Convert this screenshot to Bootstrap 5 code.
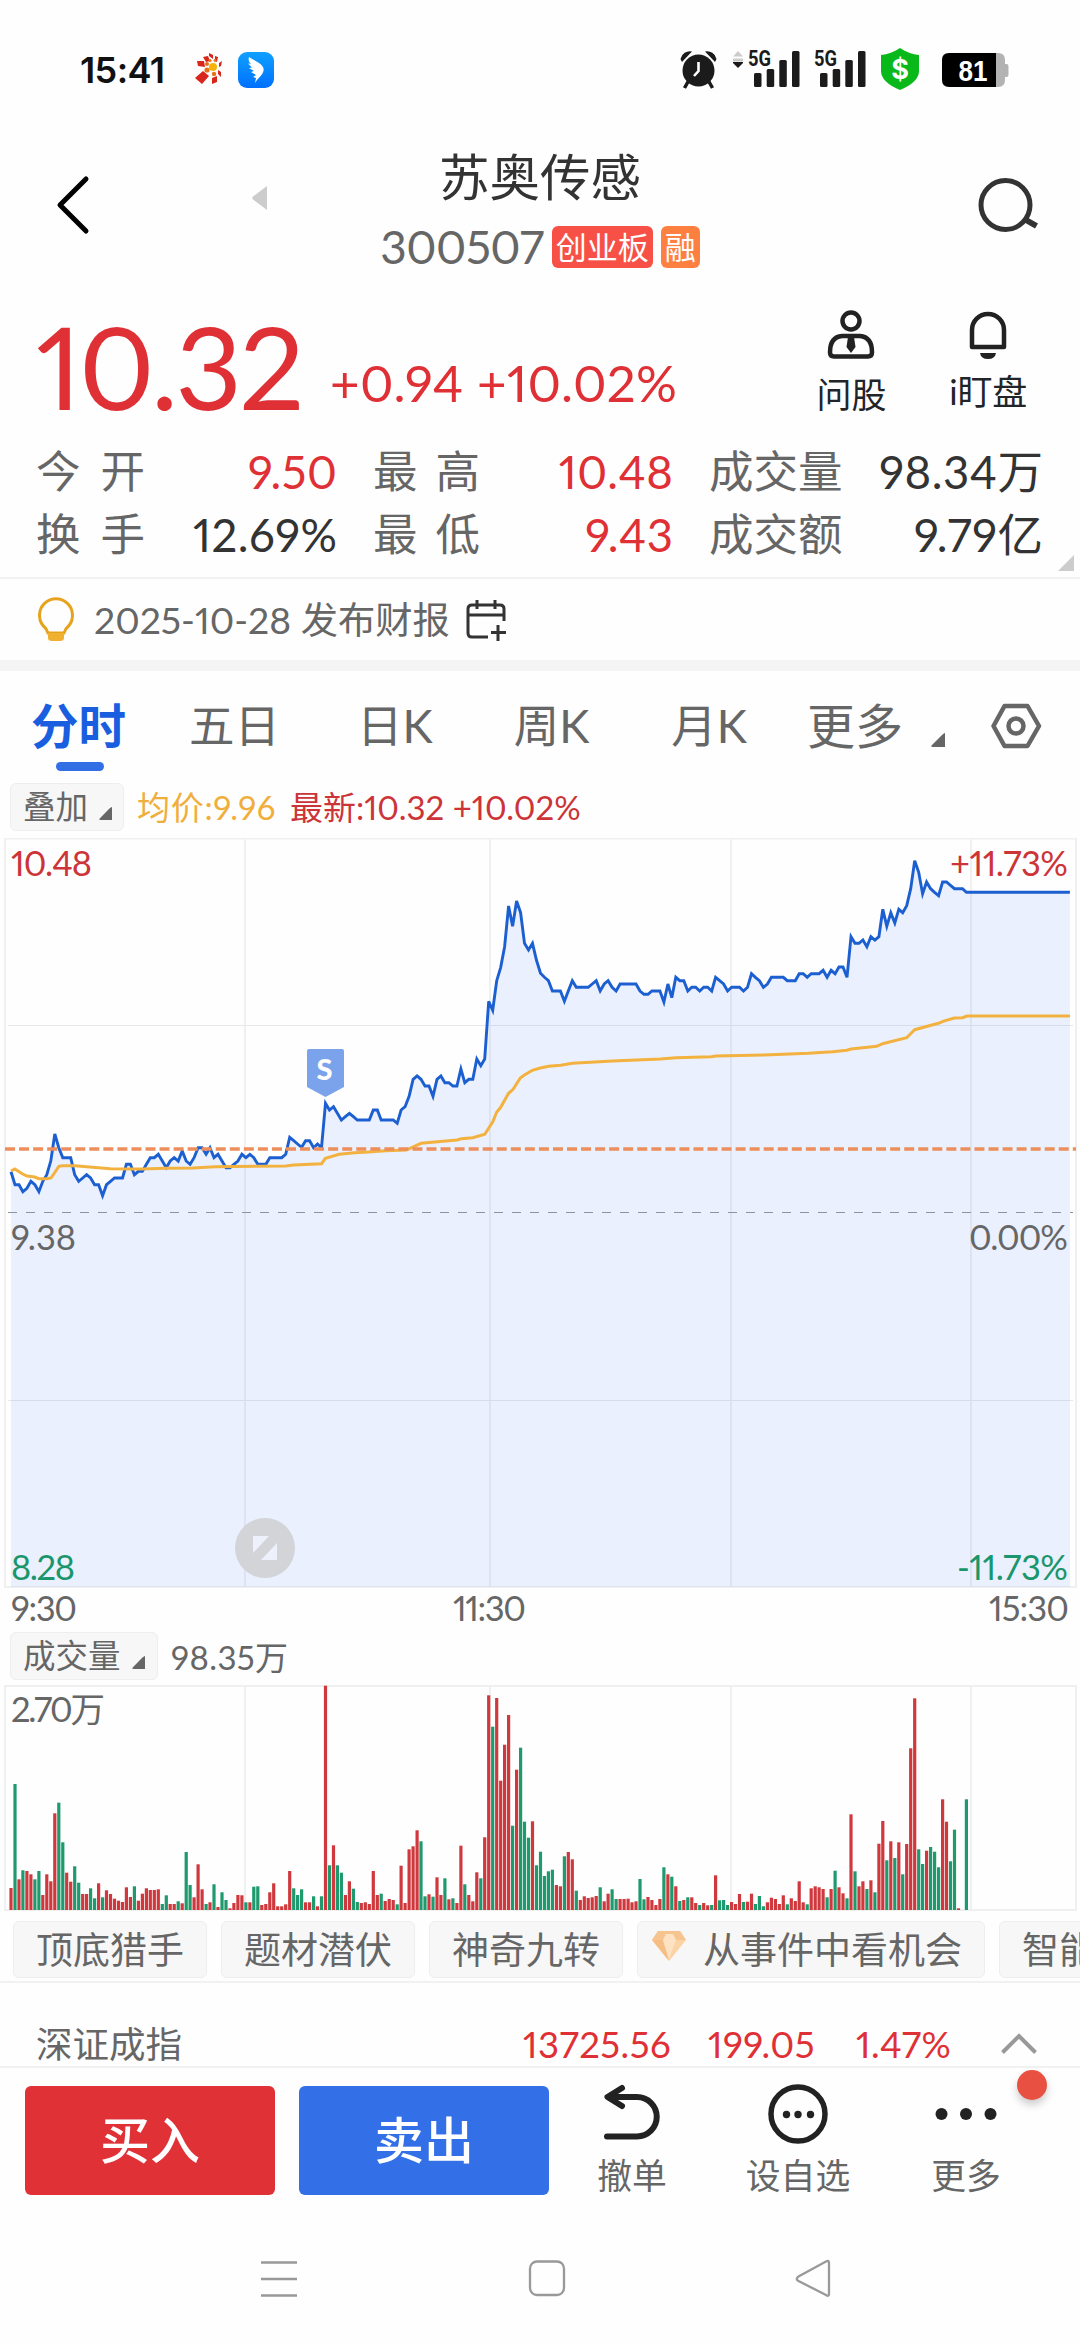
<!DOCTYPE html>
<html lang="zh-CN">
<head>
<meta charset="utf-8">
<meta name="viewport" content="width=device-width, initial-scale=1">
<title>苏奥传感 300507</title>
<link href="https://cdn.jsdelivr.net/npm/bootstrap@5.3.0/dist/css/bootstrap.min.css" rel="stylesheet">
<style>
:root{--up:#df3036;--txt:#333;--mut:#666}
html,body{background:#fefefe}
body{width:1080px;margin:0 auto;overflow-x:hidden;font-family:Lato,"Noto Sans CJK SC",sans-serif;color:var(--txt);line-height:1;font-variant-numeric:proportional-nums}
svg{display:block;flex:none}
.up{color:var(--up)}.mut{color:var(--mut)}
.status{height:140px;padding:0 70px 0 80px}
.clock{font:600 36px Inter,sans-serif;color:#111;width:90px;letter-spacing:-.6px}
.head{height:150px;display:grid;grid-template-columns:1fr auto 1fr;align-items:start}
.head .back{margin:35px 0 0 55px}
.head .prev{margin:46px 0 0 161px}
.head .find{margin:35px 41px 0 auto}
.title{font-size:50.5px;height:74px}
.code{font-size:46px;color:var(--mut);height:66px;letter-spacing:-.5px}
.tagx{color:#fff;font-size:31px;height:42px;border-radius:6px;letter-spacing:0}
.tag-board{background:#f75147}.tag-margin{background:#fe8041}
.quote{height:150px;padding-left:36px}
.last{font-size:115px;letter-spacing:-2.600px;line-height:150px;width:294px}
.chg{font-size:51px;line-height:186px;letter-spacing:.35px;white-space:nowrap}
.tool{font-size:35px;padding:18px 53px 0 0;letter-spacing:-.2px}
.tl{margin-right:63px}
.tlab{height:36px;line-height:36px}
.tl .tlab{margin-top:14px}.tl2 .tlab{margin-top:11px}
.stats{display:grid;grid-template-columns:109px 192px 143px 193px 170px 200px;padding-left:36px;grid-auto-rows:63px;align-items:center;font-size:45.5px;letter-spacing:.5px;height:137px}
.stats .k{color:var(--mut);font-size:44.5px;display:flex;justify-content:space-between;letter-spacing:0}
.stats .v{text-align:right;margin-right:-.5px}
.stats .c2,.stats .c3{padding-left:36px}
#corner{left:1058px;top:115px}
.news{height:83px;border-top:2px solid #f1f1f1;padding-left:36px;font-size:37.3px}
.newst{margin-left:18px}.cal{margin:-2px 0 0 14px}
.band{height:11px;background:#f4f4f4}
.tabs{height:112px;font-size:45.5px;color:var(--mut);padding-bottom:2px}
.tab-it{height:112px}
.tab-on{color:#1a5ee0;font-weight:700;font-size:47.5px}
.tab-on i{width:48px;height:9px;border-radius:5px;background:#326fe5;left:25px;top:92px}
#t0{margin-left:31px}#t1{margin-left:63px}#t2{margin-left:77px}#t3{margin-left:81px}#t4{margin-left:82px}#t5{margin-left:60px;font-size:48px}#t6{margin:27px 0 0 28px}#t7{margin:-1px 0 0 45px}
.chipx{background:#f7f7f7;border:1px solid #eee;border-radius:6px;color:var(--mut)}
.mini{height:48px;font-size:32.5px;padding-left:12px}
#ov{width:114px}#vo{width:148px}.mini svg{margin:12px 0 0 11px}
.legend{height:55px;padding-left:10px;font-size:33px}
.legend>span,.volrow>span{height:48px;display:inline-flex;align-items:center;white-space:nowrap}
.lg1{margin-left:13px}.lg2{margin-left:13px;color:#cc3438}
.avg{color:#f0ae3c;width:140px;letter-spacing:.7px}
.volrow{height:50px;padding-left:10px;font-size:33px}
.vtx{letter-spacing:.4px;padding-top:2px}
.strats{height:71px;padding:9px 0 0 13px;gap:14px;font-size:37px;border-bottom:2px solid #f1f1f1}
.strats .chipx{height:57px;padding:0 22px;flex:none;white-space:nowrap}
#gem{padding-left:14px}#gem svg{margin:-7px 17px 0 0}
.index{height:85px;padding:39px 0 0 36px;font-size:36.5px;border-bottom:2px solid #f1f1f1;letter-spacing:.45px}
.idxn{font-size:36.5px;width:487px;letter-spacing:0}.ix1{width:185px}.ix2{width:148px}.ix3{width:144px}
.trade{height:137px;padding:18px 0 0 25px}
.bigbtn{width:250px;height:109px;border-radius:6px;border:0;font-size:50px;font-weight:500;color:#fff!important;padding:0}
.buy{background:#e03137!important}.sell{background:#336fe6!important}
.act{font-size:34.8px;color:var(--mut);margin-top:-3px}
.act div{margin-top:13px;height:36px;line-height:36px;white-space:nowrap}
.a1{margin-left:47px;width:72px}.a1 div{margin-top:17px}.a2{margin-left:77px;width:106px}.a3{margin-left:79px;width:72px}
.reddot{width:30px;height:30px;border-radius:50%;background:#e85042;box-shadow:0 5px 8px rgba(0,0,0,.2);left:1017px;top:2px}
.sysnav{height:139px;padding-top:54px}
#n1{margin-left:260px}#n2{margin-left:230px}#n3{margin-left:229px}
text{font-family:Lato,"Noto Sans CJK SC",sans-serif}
.cell5g{font-family:Roboto,sans-serif}.cash{font-family:Inter,sans-serif}.batt{font-family:"Liberation Sans",sans-serif}
</style>
</head>
<body>
<header>
  <div class="status d-flex align-items-center">
    <span class="clock">15:41</span>
    <svg class="ms-4" width="36" height="36" viewBox="194 52 36 36">
      <g fill="#d8261c"><path d="M197 61l7 0 1 6-7-1zM195 78l8-7 6 5-7 8zM203 57l5-1 2 5-4 1zM212 78l5-2 0 6-5 2zM209 53l4 2 0 4-4-3zM215 56l3 1-1 5-2-1zM219 63l3-2-1 5-2 1zM218 70l3 2 0 5-3-3z"/></g>
      <circle cx="213" cy="67" r="4" fill="#f6b40a"/><g fill="#e8701a"><circle cx="207" cy="64" r="2"/><circle cx="210" cy="60.500" r="1.600"/><circle cx="207" cy="70" r="2.600"/><circle cx="214" cy="74" r="2.200"/><circle cx="215" cy="60.500" r="1.400"/></g>
    </svg>
    <svg class="ms-2" width="36" height="36" viewBox="0 0 36 36"><defs><linearGradient id="dg" x2="0" y2="1"><stop stop-color="#10a0ff"/><stop offset="1" stop-color="#0070ff"/></linearGradient></defs><rect width="36" height="36" rx="9" fill="url(#dg)"/><path d="M11 5C15 8 22 10 25 15C27 19 24 23 19 28L17 31L18 26L15 25L18 23L13 20L16 19L11 16L14 15.500L10 11.500L13 12C11 10 10 8 11 5Z" fill="#fff"/></svg>
    <svg class="ms-auto" width="330" height="44" viewBox="680 48 330 44">
      <g fill="#1b1b1b"><circle cx="698.500" cy="70.500" r="16"/><path d="M680.500 59A9.500 9.500 0 0 1 692 51.500L682 62ZM716.500 59A9.500 9.500 0 0 0 705 51.500L715 62Z"/><path d="M689 80l-4.500 8M708 80l4.500 8" stroke="#1b1b1b" stroke-width="3.500"/></g>
      <path d="M698.500 62v9l-4.500 5" fill="none" stroke="#fff" stroke-width="2.600"/>
      <path d="M733 56.500L738 51L743 56.500Z" fill="#ccc"/><path d="M733 58.500h10v3h-10Z" fill="#ccc"/><path d="M733 62h10v1l-5 5L733 63Z" fill="#1b1b1b"/>
      <g id="sg" fill="#1b1b1b"><text class="cell5g" x="748" y="66" font-size="22" font-weight="700" textLength="23" lengthAdjust="spacingAndGlyphs">5G</text><rect x="754" y="73" width="7.500" height="14" rx="1.500"/><rect x="766.700" y="69" width="7.500" height="18" rx="1.500"/><rect x="779.300" y="60" width="7.500" height="27" rx="1.500"/><rect x="792" y="51" width="7.500" height="36" rx="1.500"/></g>
      <use href="#sg" x="66"/>
      <path d="M900 48Q909 54 919 55V71Q919 82 900 90Q881 82 881 71V55Q891 54 900 48Z" fill="#09b919"/>
      <text class="cash" x="900" y="79" font-size="27" font-weight="700" fill="#fff" text-anchor="middle">$</text>
      <path d="M990 53h8q7 0 7 7v4h1.500q2 0 2 3v7q0 3-2 3H1005v3q0 7-7 7h-8Z" fill="#b3b3b3"/><path d="M996 53H949q-7 0-7 7v20q0 7 7 7h47Z" fill="#000"/>
      <text class="batt" x="958.500" y="81" font-size="29" font-weight="700" fill="#fff" textLength="29" lengthAdjust="spacingAndGlyphs">81</text>
    </svg>
  </div>
  <div class="head">
    <div class="d-flex align-items-start">
      <svg class="back" width="36" height="60" viewBox="0 0 36 60"><path d="M31 4L5 30L31 56" fill="none" stroke="#000" stroke-width="5" stroke-linecap="round" stroke-linejoin="round"/></svg>
      <svg class="prev" width="16" height="24" viewBox="0 0 16 24"><path d="M15 0V24L1 13.500Q-.5 12 1 10.500Z" fill="#ccc"/></svg>
    </div>
    <div class="text-center">
      <div class="title d-flex align-items-center justify-content-center">苏奥传感</div>
      <div class="code d-flex align-items-center justify-content-center">300507<span class="tagx tag-board d-inline-flex align-items-center ms-2 px-1">创业板</span><span class="tagx tag-margin d-inline-flex align-items-center px-1 ms-2">融</span></div>
    </div>
    <svg class="find" width="64" height="62" viewBox="974 174 64 62"><circle cx="1004.500" cy="204" r="24.500" fill="none" stroke="#333" stroke-width="5"/><path d="M1025 219l10.500 6" stroke="#333" stroke-width="6"/></svg>
  </div>
</header>
<main>
  <section class="quote d-flex up align-items-start">
    <span class="last">10.32</span><span class="chg">+0.94 +10.02%</span>
    <div class="d-flex ms-auto text-dark tool">
      <div class="text-center tl"><svg class="mx-auto" width="50" height="54" viewBox="826 308 50 54"><g fill="none" stroke="#222" stroke-width="4.500"><circle cx="851" cy="321" r="8.500"/><path d="M830 352.500Q830 337 842 336H860Q872 337 872 352.500Q872 356.500 868 356.500H834Q830 356.500 830 352.500Z"/></g><path d="M848 337h6l1.500 10-4.500 6-4.500-6Z" fill="#222"/></svg><div class="tlab">问股</div></div>
      <div class="text-center tl2"><svg class="mx-auto" width="50" height="54" viewBox="963 308 50 54"><path d="M972 347V330A16 16 0 0 1 1004 330V347Z" fill="none" stroke="#222" stroke-width="4.500" stroke-linejoin="round"/><path d="M980 353h16q-1 6-8 6t-8-6Z" fill="#222"/></svg><div class="tlab">i盯盘</div></div>
    </div>
  </section>
  <section class="stats position-relative">
    <span class="k"><b class="fw-normal">今</b><b class="fw-normal">开</b></span><span class="v up">9.50</span>
    <span class="k c2"><b class="fw-normal">最</b><b class="fw-normal">高</b></span><span class="v up">10.48</span>
    <span class="k c3">成交量</span><span class="v">98.34万</span>
    <span class="k"><b class="fw-normal">换</b><b class="fw-normal">手</b></span><span class="v">12.69%</span>
    <span class="k c2"><b class="fw-normal">最</b><b class="fw-normal">低</b></span><span class="v up">9.43</span>
    <span class="k c3">成交额</span><span class="v">9.79亿</span>
    <svg class="position-absolute" width="16" height="16" viewBox="0 0 16 16" id="corner"><path d="M16 0V16H0Z" fill="#ccc"/></svg>
  </section>
  <section class="news d-flex align-items-center mut">
    <svg width="40" height="46" viewBox="36 596 40 46"><path d="M48 632Q47 628 43 624.500A16.500 16.500 0 1 1 69 624.500Q65 628 64 632Z" fill="none" stroke="#e6a41e" stroke-width="3"/><path d="M48 632h16v5q0 3-4 3h-8q-4 0-4-3Z" fill="#f0b030"/></svg>
    <span class="newst">2025-10-28 发布财报</span>
    <svg class="cal" width="44" height="44" viewBox="460 596 44 44"><path d="M484 636H468q-4 0-4-4V608q0-4 4-4H496q4 0 4 4V620M464 614H500M473 599V608M491 599V608M494 624V640M487 631.500H502" fill="none" stroke="#333" stroke-width="3"/></svg>
  </section>
  <div class="band"></div>
  <nav class="tabs d-flex align-items-center">
    <span class="tab-on position-relative d-flex align-items-center tab-it" id="t0">分时<i class="position-absolute"></i></span>
    <span id="t1">五日</span><span id="t2">日K</span><span id="t3">周K</span><span id="t4">月K</span><span id="t5">更多</span>
    <svg id="t6" width="14" height="14" viewBox="0 0 14 14"><path d="M14 0V14H2Q-1 14 1 12L11 2Q13 0 14 0Z" fill="#666"/></svg>
    <svg id="t7" width="52" height="48" viewBox="990 701 52 48"><path d="M1004.500 705H1027.500L1039 725L1027.500 745H1004.500L993.500 725Z" fill="none" stroke="#666" stroke-width="4.500" stroke-linejoin="round"/><circle cx="1016" cy="725" r="7.500" fill="none" stroke="#666" stroke-width="4.500"/></svg>
  </nav>
  <div class="legend d-flex align-items-start">
    <span class="chipx mini" id="ov">叠加<svg width="13" height="13" viewBox="0 0 14 14"><path d="M14 0V14H2Q-1 14 1 12L11 2Q13 0 14 0Z" fill="#666"/></svg></span>
    <span class="avg lg1">均价:9.96</span><span class="lg2">最新:10.32 +10.02%</span>
  </div>
  <svg id="price" width="1080" height="794" viewBox="0 838 1080 794"></svg>
  <div class="volrow d-flex align-items-start mut">
    <span class="chipx mini" id="vo">成交量<svg width="13" height="13" viewBox="0 0 14 14"><path d="M14 0V14H2Q-1 14 1 12L11 2Q13 0 14 0Z" fill="#666"/></svg></span>
    <span class="lg1 vtx">98.35万</span>
  </div>
  <svg id="volume" width="1080" height="230" viewBox="0 1682 1080 230"></svg>
  <div class="strats d-flex overflow-hidden">
    <span class="chipx d-inline-flex align-items-center">顶底猎手</span>
    <span class="chipx d-inline-flex align-items-center">题材潜伏</span>
    <span class="chipx d-inline-flex align-items-center">神奇九转</span>
    <span class="chipx d-inline-flex align-items-center" id="gem"><svg width="34" height="30" viewBox="0 0 34 30"><path d="M6 0H28L34 9L17 30L0 9Z" fill="#fbd3a4"/><path d="M6 0H28L34 9H0Z" fill="#f6c48f"/><path d="M0 9H11L17 30Z" fill="#f6be85"/><path d="M11 9L14 3H21L24 9L17 28Z" fill="#fde3c3"/></svg>从事件中看机会</span>
    <span class="chipx d-inline-flex align-items-center">智能</span>
  </div>
  <section class="index d-flex align-items-center">
    <span class="mut idxn">深证成指</span><span class="up ix1">13725.56</span><span class="up ix2">199.05</span><span class="up ix3">1.47%</span>
    <svg class="ixc" width="38" height="22" viewBox="0 0 38 22"><path d="M2.500 19.500L19 3L35.500 19.500" fill="none" stroke="#999" stroke-width="4"/></svg>
  </section>
</main>
<footer>
  <div class="trade d-flex align-items-start position-relative">
    <button class="btn bigbtn buy">买入</button><button class="btn bigbtn sell ms-4">卖出</button>
    <div class="act text-center a1"><svg class="mx-auto" width="62" height="58" viewBox="602 2084 62 58"><path d="M608 2137.500H638A19.750 19.750 0 0 0 638 2098H610M623 2089L608.500 2098L623 2107" fill="none" stroke="#222" stroke-width="6" stroke-linecap="round" stroke-linejoin="round"/></svg><div>撤单</div></div>
    <div class="act text-center a2"><svg class="mx-auto" width="62" height="62" viewBox="767 2082 62 62"><circle cx="798" cy="2113" r="27" fill="none" stroke="#222" stroke-width="5.500"/><g fill="#222"><circle cx="786.500" cy="2113.500" r="3.700"/><circle cx="798" cy="2113.500" r="3.700"/><circle cx="810.500" cy="2113.500" r="3.700"/></g></svg><div>设自选</div></div>
    <div class="act text-center a3"><svg class="mx-auto" width="62" height="62" viewBox="935 2082 62 62"><g fill="#222"><circle cx="941.500" cy="2113" r="6"/><circle cx="966" cy="2113" r="6"/><circle cx="990.500" cy="2113" r="6"/></g></svg><div>更多</div></div>
    <span class="reddot position-absolute"></span>
  </div>
  <div class="sysnav d-flex">
    <svg id="n1" width="38" height="38" viewBox="0 0 38 38"><path d="M1 3.500H37M1 20H37M1 36.500H37" stroke="#999" stroke-width="2.500"/></svg>
    <svg id="n2" width="38" height="38" viewBox="0 0 38 38"><rect x="2" y="2.500" width="34" height="33.500" rx="7" fill="none" stroke="#999" stroke-width="2.300"/></svg>
    <svg id="n3" width="36" height="38" viewBox="0 0 36 38"><path d="M34 4V35Q34 38 31 36L3.500 22Q0 20 3.500 17.500L31 2.500Q34 1 34 4Z" fill="none" stroke="#999" stroke-width="2.300"/></svg>
  </div>
</footer>
<script src="https://cdn.jsdelivr.net/npm/bootstrap@5.3.0/dist/js/bootstrap.bundle.min.js"></script>
<script>
// One sample per minute, first at 9:30; heights are in thirds of a pixel.
const X0 = 11, STEP = 3.981, TOP = 820;
const price = [1055,1094,1094,1115,1105,1084,1094,1115,1084,1064,1023,942,983,1013,1013,1013,1064,1084,1074,1064,1074,1094,1094,1127,1094,1084,1074,1074,1074,1033,1033,1064,1054,1054,1033,1013,1013,1003,1023,1043,1023,1013,1023,993,1023,1033,1013,983,983,1003,983,1013,1003,1023,1043,1043,1033,1023,1003,1013,1003,1013,1033,1033,1033,1013,1013,1013,1013,1003,952,962,972,982,962,962,983,972,983,850,870,860,880,900,890,880,890,900,900,900,900,870,870,900,900,900,900,910,870,860,829,778,768,778,798,798,829,778,768,788,788,798,798,747,788,778,778,717,737,717,544,571,482,442,380,258,319,243,278,370,390,370,421,460,472,482,513,513,513,544,513,482,502,502,502,502,492,482,513,492,482,502,513,492,492,492,492,492,513,523,523,513,513,513,546,492,533,472,482,482,513,502,502,513,502,502,513,472,482,492,513,502,502,502,513,502,461,472,482,502,492,472,472,472,472,482,482,482,461,461,472,461,461,461,451,472,451,461,441,441,472,350,370,370,360,380,350,360,350,268,319,278,309,268,278,257,206,122,157,221,186,206,217,227,186,186,196,206,206,206,217];
while (price.length < 267) price.push(217);
const avgL = [32,1053,43,1047,66,1062,78,1068,101,1071,113,1076,136,1076,148,1074,171,1039,182,1037,217,1037,320,1046,410,1047,483,1045,560,1044,625,1040,830,1038,853,1035,934,1031,945,1015,985,1003,1030,998,1070,996,1120,992,1180,990,1223,970,1327,960,1340,956,1373,953,1408,943,1431,905,1442,877,1454,862,1477,820,1490,808,1511,774,1523,765,1546,751,1566,745];
const avgR = [25,739,60,736,94,730,210,723,350,717,395,713,498,710,510,708,650,705,780,700,850,695,891,691,903,687,978,679,995,671,1065,653,1088,629,1157,610,1170,604,1203,594,1227,593,1240,588,1539,588];
const pts = price.map((y, i) => (X0 + i * STEP).toFixed(1) + ',' + (TOP + y / 3).toFixed(1));
const pair = (a, off) => { let s = ''; for (let i = 0; i < a.length; i += 2) s += (off + a[i] / 2.904).toFixed(1) + ',' + (TOP + a[i + 1] / 3).toFixed(1) + ' '; return s; };
const label = (x, y, t, c, a, w) => `<text x="${x}" y="${y}" font-size="34.500" fill="${c}" text-anchor="${a}"${w ? ` textLength="${w}"` : ''}>${t}</text>`;
const cols = [245, 490, 731, 971];
document.getElementById('price').innerHTML =
  `<path d="M5 838.500H1076V1587H5Z${cols.map(x => `M${x} 839V1587`).join('')}" fill="none" stroke="#f0f0f0" stroke-width="2"/>` +
  `<path d="M8 1025.500H1073M8 1400.500H1073" stroke="#e8e8e8"/>` +
  `<polygon points="11,1587 ${pts.join(' ')} 1070,1587" fill="#2e6cff" fill-opacity=".095"/>` +
  `<path d="M8 1212.500H1073" stroke="#8e93a3" stroke-width="1.200" stroke-dasharray="9 9"/>` +
  `<polyline points="${pts.join(' ')}" fill="none" stroke="#1c5fd0" stroke-width="2.900"/>` +
  `<polyline points="${pair(avgL, 0)}${pair(avgR, 540)}" fill="none" stroke="#f3b23f" stroke-width="3"/>` +
  `<path d="M5 1149H1076" stroke="#ec8f5c" stroke-width="3.400" stroke-dasharray="10 4.050"/>` +
  `<path d="M309 1049H342Q344 1049 344 1051V1087L325.500 1097L307 1087V1051Q307 1049 309 1049Z" fill="#7ba3ec"/><text x="324.500" y="1080" font-size="29" font-weight="900" fill="#fff" text-anchor="middle">S</text>` +
  `<circle cx="265" cy="1548" r="30" fill="#d3d4d8"/><path d="M253 1536h16L253 1553ZM277 1543v17h-16Z" fill="#edf1fb"/>` +
  label(11, 876, '10.48', '#cc3438', 'start', 81) + label(1068, 876, '+11.73%', '#cc3438', 'end', 118) +
  label(11, 1250, '9.38', '#666', 'start', 65) + label(1068, 1250, '0.00%', '#666', 'end', 99) +
  label(11, 1580, '8.28', '#1a966c', 'start', 64) + label(1068, 1580, '-11.73%', '#1a966c', 'end', 111) +
  label(11, 1621, '9:30', '#666', 'start', 66) + label(489.5, 1621, '11:30', '#666', 'middle', 73) + label(1069, 1621, '15:30', '#666', 'end', 80);

// Volume bars: top edge and direction; r rises, g falls.
const vol = '624r312g598r571g573r583r598g573g645r583r604r400r368g487g578r605r559g608g642r642r625g655g610r652g631r642r656r662r666r622r651r619g662r641r625r630r630r628r672g646g672r672r664g670r516g615g652r553r628r672g667r613g681r637g660g685r669r645r646r667g667r620g619g675r672r637r610r679r679r673r573r625g645g628g667r667r649g679r649g17r556g496r556g578g645r604r626g666g669r667r672r573r645r641g663r657r660r673g557r669r508r499r451r484g649g643r650g592r645r595g658r655g669r497r613g645r664r577r595g472r46r140g54r302r194r105r437g269r203g425g473g424r556g515g588g574g569g615r619r529g516r538r632g660r649r654r652r648r622g664r641r628g657g657r657r656r667r664r597g658g651r660r675r657r562g583r590g619r663g660r652g652r669r675g669r676r675g586r661g660g675g666r672r642r666g665r641r672g648g679g667r653r657r672r646r673g655r663r604r667r673g625r619r622r627r652g627r572g622r640r655g403r574g619r604r627g601r637g491r423r541g484r534g487r583g492r205r55r508g552g512r501g515g562g358r425r544g449g685r690r358g'.match(/\d+[rg]/g);
document.getElementById('volume').innerHTML =
  `<path d="M5 1686H1076V1910H5Z${cols.map(x => `M${x} 1686V1910`).join('')}" fill="none" stroke="#f0f0f0" stroke-width="2"/>` +
  vol.map((v, i) => { const y = 1680 + parseInt(v) / 3; return `<rect x="${(X0 - 1.6 + i * STEP).toFixed(1)}" y="${y.toFixed(1)}" width="3.2" height="${(1910 - y).toFixed(1)}" fill="${v.endsWith('r') ? '#cf393e' : '#1f9a6e'}"/>`; }).join('') +
  label(11, 1722, '2.70万', '#666', 'start', 94);
</script>
</body>
</html>
